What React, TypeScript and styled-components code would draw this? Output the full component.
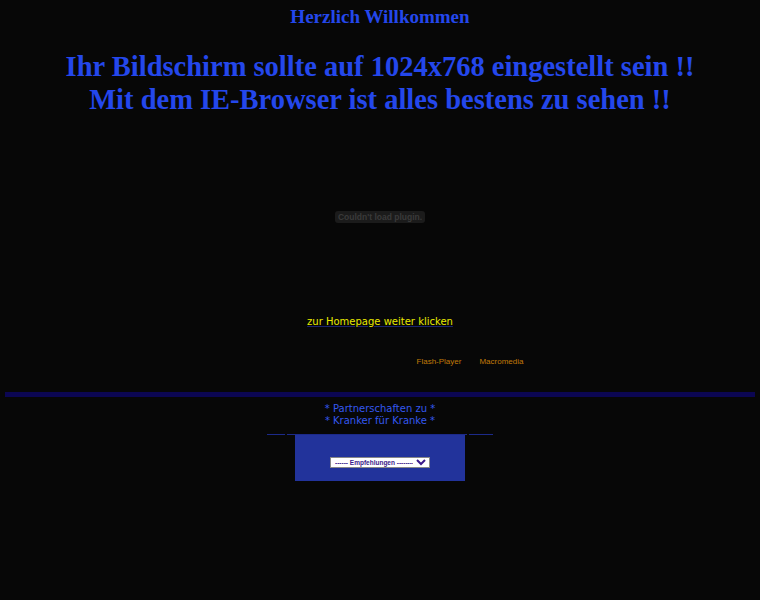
import React from "react";
import styled, { createGlobalStyle } from "styled-components";

const GlobalStyle = createGlobalStyle`
  html, body {
    margin: 0;
    padding: 0;
    background: #070707;
  }
  body {
    font-family: "Liberation Serif", "Times New Roman", serif;
  }
`;

const Page = styled.div`
  width: 760px;
  min-height: 600px;
  display: flex;
  flex-direction: column;
  align-items: center;
`;

const Welcome = styled.h3`
  margin: 6px 0 0;
  font: bold 19px "Liberation Serif", serif;
  color: #2447ec;
  text-align: center;
`;

const Notice = styled.h1`
  margin: 22px 0 0;
  font: bold 28.5px/33px "Liberation Serif", serif;
  color: #2447ec;
  text-align: center;
`;

const PluginArea = styled.div`
  height: 200px;
  width: 100%;
  display: flex;
  align-items: center;
  justify-content: center;
`;

const PluginBox = styled.div`
  background: #1b1b1b;
  border-radius: 3px;
  padding: 1px 3px;
  font: bold 8.5px "Liberation Sans", sans-serif;
  color: #3a3a3a;
  margin-top: 2px;
`;

const EnterLink = styled.a`
  margin-top: -1px;
  font: 10px "DejaVu Sans", sans-serif;
  line-height: 14px;
  color: #eaea00;
  text-decoration: underline;
  text-decoration-color: #1a2370;
`;

const FlashRow = styled.div`
  margin: 28px 0 0 180px;
  display: flex;
  gap: 18px;
`;

const SmallLink = styled.a`
  font: 8px "Liberation Sans", sans-serif;
  color: #c07a08;
  text-decoration: none;
`;

const Divider = styled.div`
  width: 750px;
  height: 5px;
  margin-top: 26px;
  background: #0b0652;
`;

const Partners = styled.div`
  margin-top: 6px;
  font: 10px/12px "DejaVu Sans", sans-serif;
  color: #3458ee;
  text-align: center;
`;

const LinkRow = styled.div`
  width: 226px;
  margin-top: 7px;
  height: 1px;
  display: flex;
  justify-content: space-between;
`;

const Dash = styled.span<{ w: number }>`
  width: ${({ w }) => w}px;
  height: 1px;
  background: #1c2a8a;
`;

const Panel = styled.div`
  width: 170px;
  height: 46px;
  background: #22339b;
  display: flex;
  align-items: flex-end;
  justify-content: center;
  padding-bottom: 13px;
  box-sizing: border-box;
`;

const Select = styled.select`
  width: 100px;
  height: 11px;
  font: bold 6.5px "Liberation Sans", sans-serif;
  color: #3b1a8a;
  background: #fff;
  border: 1px solid #888;
  padding: 0;
`;

export default function App() {
  return (
    <>
      <GlobalStyle />
      <Page>
        <Welcome>Herzlich Willkommen</Welcome>
        <Notice>
          Ihr Bildschirm sollte auf 1024x768 eingestellt sein !!
          <br />
          Mit dem IE-Browser ist alles bestens zu sehen !!
        </Notice>
        <PluginArea>
          <PluginBox>Couldn't load plugin.</PluginBox>
        </PluginArea>
        <EnterLink href="#">zur Homepage weiter klicken</EnterLink>
        <FlashRow>
          <SmallLink href="#">Flash-Player</SmallLink>
          <SmallLink href="#">Macromedia</SmallLink>
        </FlashRow>
        <Divider />
        <Partners>
          * Partnerschaften zu *
          <br />* Kranker für Kranke *
        </Partners>
        <LinkRow>
          <Dash w={18} />
          <Dash w={180} />
          <Dash w={24} />
        </LinkRow>
        <Panel>
          <Select defaultValue="e">
            <option value="e">------ Empfehlungen --------</option>
          </Select>
        </Panel>
      </Page>
    </>
  );
}
